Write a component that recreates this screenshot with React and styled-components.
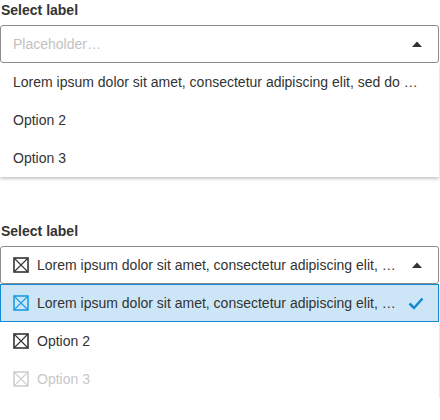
import React from "react";
import styled, { createGlobalStyle } from "styled-components";

const Global = createGlobalStyle`
  html, body { margin: 0; padding: 0; background: #fff; }
  body { font-family: "Liberation Sans", Arial, sans-serif; color: #333; }
`;

const Page = styled.div`
  width: 440px;
  display: flex;
  flex-direction: column;
  gap: 44px;
`;

const Field = styled.div`
  display: flex;
  flex-direction: column;
`;

const Label = styled.div`
  font-size: 14px;
  font-weight: 700;
  line-height: 20px;
  height: 25px;
  color: #333;
  padding-left: 1px;
`;

const Box = styled.div`
  height: 36px;
  margin: 0 1px 0 0;
  border: 1px solid #8c8c8c;
  border-radius: 3px;
  display: flex;
  align-items: center;
  padding: 0 12px;
  gap: 8px;
  background: #fff;
`;

const Value = styled.span`
  flex: 1;
  min-width: 0;
  font-size: 14px;
  color: ${(p) => (p.$placeholder ? "#c2c2c2" : "#333")};
  white-space: nowrap;
  overflow: hidden;
  text-overflow: ellipsis;
`;

const List = styled.div`
  display: flex;
  flex-direction: column;
  background: #fff;
  box-shadow: 0 2px 3px rgba(0, 0, 0, 0.22);
  margin-right: 1px;
`;

const Option = styled.div`
  height: 38px;
  box-sizing: border-box;
  display: flex;
  align-items: center;
  gap: 8px;
  padding: 0 12px 0 12px;
  font-size: 14px;
  color: ${(p) => (p.$disabled ? "#c8c8c8" : "#333")};
  background: ${(p) => (p.$selected ? "#cde6f7" : "#fff")};
  border: ${(p) => (p.$selected ? "1px solid #1588d2" : "1px solid transparent")};
`;

const OptionText = styled.span`
  flex: 1;
  min-width: 0;
  white-space: nowrap;
  overflow: hidden;
  text-overflow: ellipsis;
`;

const Caret = () => (
  <svg width="10" height="6" viewBox="0 0 10 6" style={{ flex: "none", marginRight: 4 }}>
    <path d="M0 6 L5 0.5 L10 6 Z" fill="#333" />
  </svg>
);

const Check = () => (
  <svg width="16" height="13" viewBox="0 0 16 13" style={{ flex: "none", marginRight: 2 }}>
    <path d="M1.5 6.5 L6 11 L14.5 1.5" fill="none" stroke="#1588d2" strokeWidth="2.5" />
  </svg>
);

const BoxIcon = ({ color }) => (
  <svg width="16" height="16" viewBox="0 0 16 16" style={{ flex: "none" }}>
    <rect x="1" y="1" width="14" height="14" fill="none" stroke={color} strokeWidth="1.6" />
    <path d="M1.5 1.5 L14.5 14.5 M14.5 1.5 L1.5 14.5" stroke={color} strokeWidth="1.1" />
  </svg>
);

const LONG = "Lorem ipsum dolor sit amet, consectetur adipiscing elit, sed do …";
const SHORT = "Lorem ipsum dolor sit amet, consectetur adipiscing elit, …";

export default function App() {
  return (
    <>
      <Global />
      <Page>
        <Field>
          <Label>Select label</Label>
          <Box>
            <Value $placeholder>Placeholder…</Value>
            <Caret />
          </Box>
          <List>
            <Option>
              <OptionText>{LONG}</OptionText>
            </Option>
            <Option>
              <OptionText>Option 2</OptionText>
            </Option>
            <Option>
              <OptionText>Option 3</OptionText>
            </Option>
          </List>
        </Field>
        <Field>
          <Label>Select label</Label>
          <Box>
            <BoxIcon color="#333" />
            <Value>{SHORT}</Value>
            <Caret />
          </Box>
          <List>
            <Option $selected>
              <BoxIcon color="#1a9be6" />
              <OptionText>{SHORT}</OptionText>
              <Check />
            </Option>
            <Option>
              <BoxIcon color="#333" />
              <OptionText>Option 2</OptionText>
            </Option>
            <Option $disabled>
              <BoxIcon color="#cfcfcf" />
              <OptionText>Option 3</OptionText>
            </Option>
          </List>
        </Field>
      </Page>
    </>
  );
}
